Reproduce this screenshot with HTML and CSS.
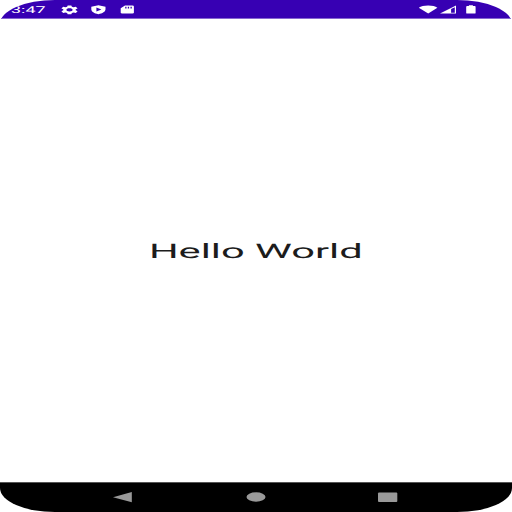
FILE: index.html
```html
<!DOCTYPE html>
<html lang="en">
<head>
<meta charset="utf-8">
<title>Hello World</title>
<link rel="stylesheet" href="styles.css">
</head>
<body>
<div class="screen">
  <header class="status">
    <span class="clock">3:47</span>
    <svg class="notices" width="76" height="18" viewBox="0 0 76 18">
      <g fill="#fff">
        <path fill-rule="evenodd" d="M7.700 5.500h3.600l.6 1.200 1.700.5 2.200-.4 1.800 1.600-1.900.9v1l1.900 1-1.800 1.600-2.200-.4-1.700.5-.6 1.200H7.700l-.6-1.200-1.700-.5-2.200.4-1.800-1.600 1.900-1v-1l-1.900-.9L3.200 6.800l2.200.4 1.700-.5zM9.500 8.200c-1.900 0-3.100.7-3.100 1.600s1.200 1.600 3.100 1.600 3.100-.7 3.100-1.600-1.200-1.600-3.100-1.600z"/>
        <path fill-rule="evenodd" d="M38.400 5.300l7.100 1.500v2.500c0 2.300-3 4.200-7.100 4.900-4.100-.7-7.100-2.600-7.100-4.900V6.800zM36.400 7.400v4.200l5-2.100z"/>
        <path fill-rule="evenodd" d="M65 5.600h7.400q1.500 0 1.500.9v6.200q0 .8-1.500.8H62.200q-1.500 0-1.500-.8V8.300zM65.200 6.800v1.700h1.300V6.800zM67.800 6.800v1.700h1.300V6.800zM70.500 6.800v1.700h1.300V6.800z"/>
      </g>
    </svg>
    <svg class="system" width="60" height="18" viewBox="0 0 60 18">
      <g fill="#fff">
        <path d="M.8 7.700C3 6.200 6 5.500 10.200 5.500s7 .7 9.200 2.200l-9.200 5.800z"/>
        <path fill-rule="evenodd" d="M22 13.600L38 5.500v8.100zM33.100 9v3.700h3.700V7.200z"/>
        <path d="M50.900 5.300h4v.8h1.700q1 0 1 .6v6.300q0 .6-1 .6h-7.400q-1 0-1-.6V6.700q0-.6 1-.6h1.700z"/>
      </g>
    </svg>
  </header>
  <main class="content"><span class="greeting">Hello World</span></main>
  <nav class="navbar">
    <svg width="512" height="30" viewBox="0 0 512 30">
      <g fill="#999">
        <path d="M113 15.200L131.800 10v10.300z"/>
        <ellipse cx="256" cy="15" rx="9.500" ry="4.700"/>
        <rect x="378" y="10.500" width="19.300" height="9.400" rx="1"/>
      </g>
    </svg>
  </nav>
</div>
</body>
</html>
```
FILE: styles.css
```css
body {
  margin: 0;
  background: #fff;
}

.screen {
  width: 512px;
  height: 512px;
  display: flex;
  flex-direction: column;
  overflow: hidden;
  border-radius: 55px / 24px;
  background: #fff;
  font-family: Roboto, "Liberation Sans", sans-serif;
  text-rendering: geometricPrecision;
}

.status {
  box-sizing: border-box;
  height: 19px;
  flex: none;
  display: flex;
  align-items: flex-start;
  padding-left: 11px;
  background: #3700b3;
  border-bottom: 1px solid #8766d1;
}

.clock {
  width: 49px;
  color: #fff;
  font-size: 9.6px;
  line-height: 20px;
  white-space: nowrap;
  transform: translateY(1px) scaleX(1.87);
  transform-origin: left center;
}

.notices {
  display: block;
  flex: none;
}

.system {
  display: block;
  flex: none;
  margin-left: 282px;
}

.content {
  flex: 1;
  display: flex;
  align-items: center;
  justify-content: center;
}

.greeting {
  color: #1c1c1c;
  font-size: 20px;
  line-height: 24px;
  white-space: nowrap;
  transform: translateX(-0.6px) scaleX(2.08);
}

.navbar {
  box-sizing: border-box;
  height: 30px;
  flex: none;
  background: #000;
  border-top: 1px solid #555;
}

.navbar svg {
  display: block;
  margin-top: -1px;
}
```
